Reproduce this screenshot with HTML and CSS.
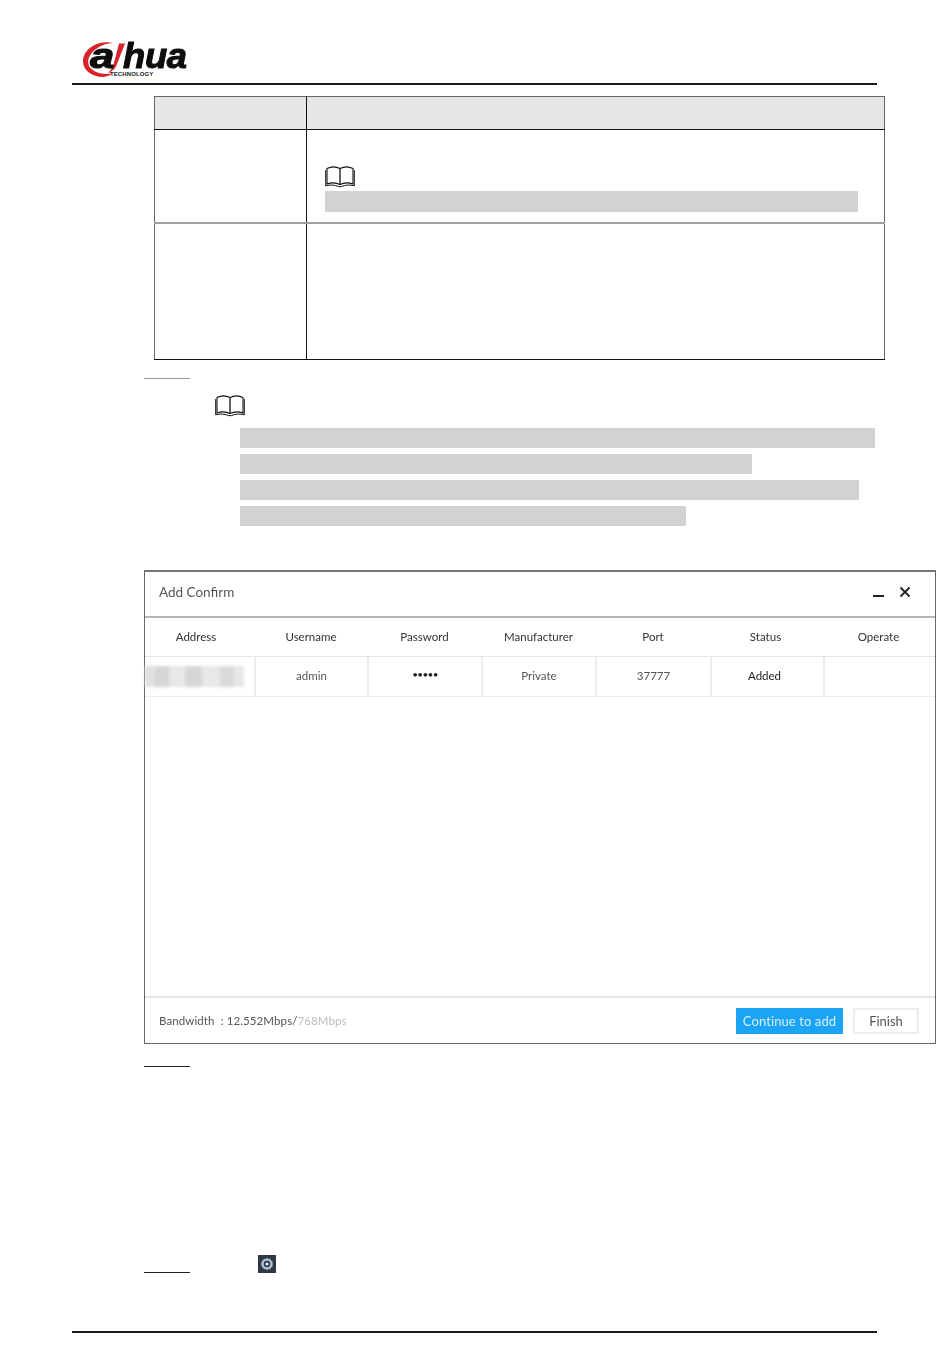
FILE: index.html
```html
<!DOCTYPE html>
<html lang="en">
<head>
<meta charset="utf-8">
<title>Add Confirm</title>
<link rel="stylesheet" href="styles.css">
</head>
<body>
<svg class="defs" width="0" height="0" aria-hidden="true">
  <symbol id="book" viewBox="0 0 30 22">
    <path d="M2 2.500C6 .5 11 .5 15 2.500C19 .5 24 .5 28 2.500V18C24 16.500 19 16.500 15 18.500C11 16.500 6 16.500 2 18Z" fill="#fff" stroke="#111" stroke-width="1.100"/>
    <path d="M15 2.500V18.500" stroke="#111" stroke-width="1.300"/>
    <path d="M.7 4V19.800C5 18.600 10 18.800 13.500 20.600H16.500C20 18.800 25 18.600 29.300 19.800V4" fill="none" stroke="#111" stroke-width="1"/>
  </symbol>
</svg>

<header class="doc-header">
  <div class="logo">
    <svg class="logo-arc" viewBox="0 0 60 38" aria-hidden="true">
      <path d="M31 3C19 0 5 6 1.500 17C-1 27 6 36 20 37C24 37 28 35.500 30 33.500C22 35 11 33 7 26C3 17 14 4 31 3Z" fill="#d8232a"/>
      <path d="M37 3.500L43 3.500L35 24C33.500 29 30 31.500 26 33C30 29.500 31.500 25 32.500 21Z" fill="#d8232a"/>
    </svg>
    <span class="logo-a">a</span><span class="logo-hua">hua</span>
    <span class="logo-sub">TECHNOLOGY</span>
  </div>
</header>

<table class="param-table">
  <tr class="row-head"><td class="col-a"></td><td></td></tr>
  <tr class="row-note">
    <td class="col-a"></td>
    <td>
      <svg class="book"><use href="#book"/></svg>
      <div class="bar bar-cell"></div>
    </td>
  </tr>
  <tr class="row-plain"><td class="col-a"></td><td></td></tr>
</table>

<div class="step-line step-first"></div>

<section class="note">
  <svg class="book"><use href="#book"/></svg>
  <div class="note-bars">
    <div class="bar bar-1"></div>
    <div class="bar bar-2"></div>
    <div class="bar bar-3"></div>
    <div class="bar bar-4"></div>
  </div>
</section>

<section class="dialog">
  <div class="dialog-title">
    <span class="soft">Add Confirm</span>
    <div class="win-actions">
      <span class="win-min"></span>
      <svg class="win-close" viewBox="0 0 12 12" aria-hidden="true"><path d="M1.500 1.500L10.500 10.500M10.500 1.500L1.500 10.500" stroke="#222" stroke-width="1.800"/></svg>
    </div>
  </div>
  <div class="grid grid-head soft">
    <div class="head-first">Address</div><div>Username</div><div>Password</div><div>Manufacturer</div><div>Port</div><div class="head-status">Status</div><div>Operate</div>
  </div>
  <div class="grid grid-row soft">
    <div><span class="blurred"></span></div><div>admin</div><div class="dots">•••••</div><div>Private</div><div>37777</div><div class="strong">Added</div><div></div>
  </div>
  <div class="dialog-body"></div>
  <div class="dialog-foot">
    <span class="bandwidth soft">Bandwidth &nbsp;: 12.552Mbps/<span class="muted">768Mbps</span></span>
    <div class="foot-actions soft">
      <span class="btn btn-primary">Continue to add</span>
      <span class="btn btn-plain">Finish</span>
    </div>
  </div>
</section>

<div class="step-line step-second"></div>

<div class="step-gear">
  <div class="step-line"></div>
  <svg class="gear" viewBox="0 0 18 18" aria-hidden="true">
    <rect width="18" height="18" fill="#2c3747"/>
    <path d="M9 2.500L10.300 4.300L12.300 3.600L12.700 5.500L14.700 5.900L14 7.800L15.500 9L14 10.200L14.700 12.100L12.700 12.500L12.300 14.400L10.300 13.700L9 15.500L7.700 13.700L5.700 14.400L5.300 12.500L3.300 12.100L4 10.200L2.500 9L4 7.800L3.300 5.900L5.300 5.500L5.700 3.600L7.700 4.300Z" fill="#b9c3cf"/>
    <circle cx="9" cy="9" r="3.300" fill="#2c3747"/>
    <circle cx="9" cy="9" r="1.600" fill="#dfe6ee"/>
  </svg>
</div>

<footer class="doc-footer"></footer>
</body>
</html>
```
FILE: styles.css
```css
* { box-sizing: border-box; }
html, body { margin: 0; padding: 0; background: #fff; }
body {
  width: 950px;
  height: 1360px;
  overflow: hidden;
  font-family: "Lato", "Liberation Sans", sans-serif;
  color: #333;
}
.defs { position: absolute; }
.soft { filter: blur(.35px); }

.doc-header {
  height: 85px;
  margin: 0 73px 0 72px;
  border-bottom: 2px solid #1a1a1a;
  padding: 40px 0 0 10px;
}
.logo {
  position: relative;
  width: 106px;
  height: 38px;
  font-family: "Liberation Sans", sans-serif;
  font-weight: 700;
  font-style: italic;
  color: #0c0c0c;
}
.logo-arc { position: absolute; left: 0; top: 0; width: 60px; height: 38px; }
.logo-a {
  position: absolute; left: 8px; top: 3px;
  font-size: 35px; line-height: 26px;
  -webkit-text-stroke: 1px #0c0c0c;
  transform: scaleX(1.25); transform-origin: left;
}
.logo-hua {
  position: absolute; left: 41px; top: 3px;
  font-size: 35px; line-height: 26px; letter-spacing: -.3px;
  -webkit-text-stroke: 1px #0c0c0c;
  transform: scaleX(1.04); transform-origin: left;
}
.logo-sub {
  position: absolute; left: 28px; top: 31px;
  font-size: 6px; line-height: 6px; font-style: normal; letter-spacing: .1px; color: #222;
}

.param-table {
  margin: 11px 0 0 154px;
  width: 731px;
  border-collapse: collapse;
  table-layout: fixed;
}
.param-table td { border: 1px solid #111; padding: 0 18px; vertical-align: top; }
.param-table .col-a { width: 152px; }
.row-head td { height: 33px; background: #e6e6e6; border-top-color: #666; }
.row-note td { height: 93px; padding-top: 36px; border-bottom: 2px solid #a0a0a0; }
.row-plain td { height: 137px; }
.param-table tr td:first-child { border-left-color: #666; }
.param-table tr td:last-child { border-right-color: #666; }

.book { display: block; width: 30px; height: 22px; }
.bar { background: #d2d2d2; height: 21px; }
.bar-cell { width: 533px; margin-top: 3px; }

.step-line { width: 46px; height: 1px; background: #222; }
.step-first { margin: 18px 0 0 144px; background: #999; }
.step-second { margin: 22px 0 0 144px; }

.note { margin: 16px 0 0 215px; }
.note-bars { margin: 11px 0 0 25px; display: flex; flex-direction: column; gap: 6px; }
.note-bars .bar { height: 20px; }
.bar-1 { width: 635px; }
.bar-2 { width: 512px; }
.bar-3 { width: 619px; }
.bar-4 { width: 446px; }

.dialog {
  margin: 44px 0 0 144px;
  width: 792px;
  height: 474px;
  border: 1px solid #666;
  border-top: 2px solid #777;
  display: flex;
  flex-direction: column;
  font-size: 11.500px;
  color: #444;
}
.dialog-title {
  height: 46px;
  flex: none;
  padding: 0 24px 4px 14px;
  display: flex;
  align-items: center;
  justify-content: space-between;
  border-bottom: 2px solid #b5b5b5;
  font-size: 13.500px;
  color: #555;
}
.win-actions { display: flex; align-items: center; gap: 15px; }
.win-min { width: 11px; height: 2px; background: #222; margin-top: 8px; }
.win-close { width: 12px; height: 12px; display: block; }

.grid {
  display: grid;
  grid-template-columns: 111px 113px 114px 114px 115px 113px 1fr;
  flex: none;
}
.grid > div { display: flex; align-items: center; justify-content: center; }
.grid-head { height: 39px; border-bottom: 1px solid #e6e6e6; color: #333; }
.grid-head > div { padding: 0 3px 2px 0; }
.grid-head > .head-first { padding-right: 9px; }
.grid-head > .head-status { padding-right: 6px; }
.grid-row { height: 40px; border-bottom: 1px solid #ececec; color: #555; }
.grid-row > div { border-right: 2px solid #ececec; padding-bottom: 2px; }
.grid-row > div:first-child { justify-content: flex-start; padding-bottom: 0; }
.grid-row > div:last-child { border-right: 0; }
.grid-row > .dots { font-size: 10px; padding-bottom: 6px; color: #222; letter-spacing: -.7px; }
.grid-row > .strong { color: #222; padding-right: 6px; }
.blurred {
  display: block;
  width: 99px;
  height: 21px;
  background: linear-gradient(90deg, #e0e0e0 0 10%, #d5d5d5 10% 24%, #e8e8e8 24% 40%, #d6d6d6 40% 58%, #e8e8e8 58% 76%, #dadada 76% 90%, #e8e8e8 90%);
  filter: blur(1.500px);
}
.dialog-body { flex: 1; }
.dialog-foot {
  height: 47px;
  flex: none;
  border-top: 2px solid #e6e6e6;
  padding: 0 16px 0 14px;
  display: flex;
  align-items: center;
  justify-content: space-between;
}
.bandwidth { font-size: 11.500px; color: #555; letter-spacing: .1px; }
.muted { color: #bbb; }
.foot-actions { display: flex; gap: 10px; }
.btn {
  height: 26px;
  display: flex;
  align-items: center;
  justify-content: center;
  font-size: 13px;
}
.btn-primary { width: 107px; background: #1ba4f4; color: #d5efff; letter-spacing: .1px; }
.btn-plain { width: 66px; border: 2px solid #ececec; color: #555; }

.step-gear {
  margin: 185px 0 0 144px;
  height: 24px;
  display: flex;
  align-items: flex-end;
  gap: 68px;
}
.step-gear .step-line { margin-bottom: 3px; }
.gear { width: 18px; height: 18px; margin-bottom: 3px; }

.doc-footer {
  margin: 55px 73px 0 72px;
  border-top: 2px solid #1a1a1a;
}
```
